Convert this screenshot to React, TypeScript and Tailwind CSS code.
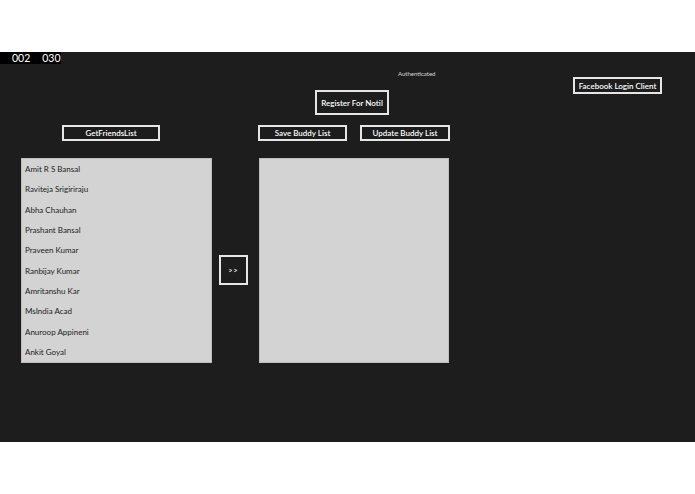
const friends = [
  'Amit R S Bansal',
  'Raviteja Srigiriraju',
  'Abha Chauhan',
  'Prashant Bansal',
  'Praveen Kumar',
  'Ranbijay Kumar',
  'Amritanshu Kar',
  'MsIndia Acad',
  'Anuroop Appineni',
  'Ankit Goyal',
]

const font = { fontFamily: 'Lato, "Open Sans", sans-serif' }

function MetroButton({ label, className }: { label: string; className: string }) {
  return (
    <button
      className={`flex items-center justify-center overflow-hidden whitespace-nowrap border-2 border-[#e6e6e6] bg-[#1d1d1d] font-semibold text-white ${className}`}
    >
      {label}
    </button>
  )
}

export default function App() {
  return (
    <div className="h-[494px] w-[695px] bg-white" style={font}>
      <div className="h-[52px]" />

      <div className="relative h-[390px] bg-[#1d1d1d]">
        {/* frame counter */}
        <div className="absolute left-0 top-0 flex h-[12px] w-[61px] items-center gap-[12px] bg-black pl-[12px] text-[10.5px] leading-none text-white">
          <span>002</span>
          <span>030</span>
        </div>

        {/* top row */}
        <div className="flex h-[73px] items-start">
          <MetroButton label="Register For Notil" className="ml-[315px] mt-[38px] h-[25px] w-[74px] text-[8px]" />
          <span className="ml-[9px] mt-[17px] text-[6px] text-[#d8d8d8]">Authenticated</span>
          <MetroButton label="Facebook Login Client" className="ml-auto mr-[33px] mt-[25px] h-[17px] w-[89px] text-[8px]" />
        </div>

        {/* action buttons */}
        <div className="flex h-[16px]">
          <MetroButton label="GetFriendsList" className="ml-[62px] h-[16px] w-[98px] text-[8px]" />
          <MetroButton label="Save Buddy List" className="ml-[98px] h-[16px] w-[89px] text-[8px]" />
          <MetroButton label="Update Buddy List" className="ml-[13px] h-[16px] w-[90px] text-[8px]" />
        </div>

        {/* lists */}
        <div className="mt-[17px] flex items-start">
          <ul className="ml-[21px] flex h-[205px] w-[191px] flex-col border border-[#bdbdbd] bg-[#d3d3d3]">
            {friends.map((f) => (
              <li key={f} className="flex h-[20.3px] shrink-0 items-center pl-[3px] text-[8px] text-[#222]">
                {f}
              </li>
            ))}
          </ul>
          <MetroButton label=">>" className="ml-[7px] mt-[97px] h-[30px] w-[29px] text-[7px] tracking-[1px]" />
          <div className="ml-[11px] h-[205px] w-[190px] border border-[#bdbdbd] bg-[#d3d3d3]" />
        </div>
      </div>
    </div>
  )
}
